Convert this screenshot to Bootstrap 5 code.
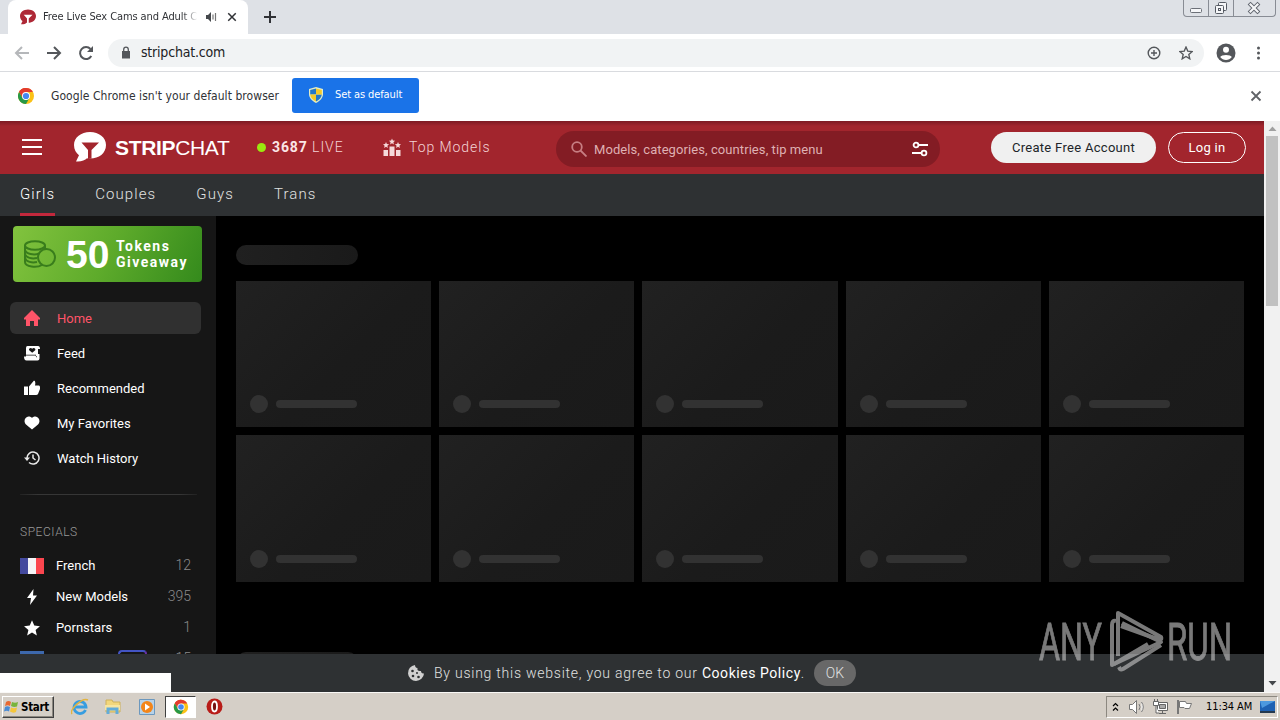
<!DOCTYPE html>
<html lang="en">
<head>
  <meta charset="UTF-8" />
  <meta name="viewport" content="width=device-width, initial-scale=1" />
  <title>Free Live Sex Cams and Adult Chat</title>
  <link href="https://cdn.jsdelivr.net/npm/bootstrap@5.3.0/dist/css/bootstrap.min.css" rel="stylesheet" />
  <style>
    html, body {
      height: 100%;
      overflow: hidden;
    }

    body {
      background: #000;
      font-family: Roboto, "Liberation Sans", sans-serif;
      font-size: 13px;
      line-height: 1.2;
    }

    svg { display: block; flex: none; }
    a { text-decoration: none; color: inherit; }

    .desktop { width: 1280px; height: 720px; }
    .ui-font { font-family: "DejaVu Sans Condensed", "DejaVu Sans", sans-serif; font-stretch: condensed; color: #303236; white-space: nowrap; }

    /* browser chrome */
    .tab-strip { height: 34px; background: #dee1e6; padding-left: 8px; }
    .browser-tab { width: 240px; height: 34px; background: #fff; border-radius: 8px 8px 0 0; padding: 0 7px 0 12px; font-size: 11px; }
    .tab-title { width: 155px; margin-left: 7px; overflow: hidden; letter-spacing: -.1px; -webkit-mask-image: linear-gradient(90deg, #000 90%, transparent 100%); mask-image: linear-gradient(90deg, #000 90%, transparent 100%); }
    .window-btns { height: 17px; width: 93px; margin-right: 4px; border: 1px solid #888c94; border-top: 0; border-radius: 0 0 4px 4px; }
    .window-btns span { border-right: 1px solid #888c94; width: 25px; }
    .window-btns span:last-child { border: 0; width: 41px; }
    .tool-bar { height: 38px; background: #fff; border-bottom: 1px solid #d9dbdf; padding-left: 14px; }
    .omnibox { width: 1096px; height: 28px; border-radius: 14px; background: #f1f3f4; margin-left: 14px; padding: 0 10px 0 12px; font-size: 14px; }
    .url-text { margin-left: 9px; letter-spacing: -.2px; color: #202124; }
    .info-bar { height: 49px; background: #fff; padding: 0 18px 1px; font-size: 12px; }
    .info-text { margin-left: 17px; width: 241px; letter-spacing: .06px; }
    .default-btn { width: 127px; height: 35px; margin-bottom: 2px; background: #1a73e8; color: #fff; border-radius: 3px; font-size: 11px; padding-left: 17px; letter-spacing: -.1px; }

    /* site */
    .site { width: 1264px; background: #000; }
    .site-head { height: 53px; background: linear-gradient(#7c1a23, #a2252d 5px); color: #fff; padding: 0 0 1px 22px; }
    .brand { font-family: "Liberation Sans", Arial, sans-serif; font-size: 21px; margin-left: 9px; width: 142px; line-height: 1; letter-spacing: -.34px; }
    .live-dot { width: 9px; height: 9px; border-radius: 50%; background: #9be80f; }
    .head-link { font-size: 14px; letter-spacing: .95px; color: #f3d3d5; font-weight: 300; }
    .head-link b { font-weight: 700; letter-spacing: .9px; color: #fbe6e6; }
    .search-box { width: 384px; height: 36px; border-radius: 18px; background: #831c24; color: #dfb0b3; margin-top: 3px; padding: 0 12px 0 15px; letter-spacing: .08px; }
    .round-btn { height: 31px; border-radius: 16px; font-size: 13px; letter-spacing: .3px; display: flex; align-items: center; justify-content: center; padding-top: 1px; }
    .sub-nav { height: 42px; background: #2e3133; padding-left: 20px; font-size: 15px; font-weight: 300; letter-spacing: 1.1px; color: #e0e1e1; }
    .sub-nav a { height: 42px; line-height: 40px; }
    .sub-nav a.current { color: #fff; border-bottom: 3px solid #c2283c; }

    .side-bar { width: 216px; background: #161616; color: #fff; letter-spacing: 0; }
    .promo { margin: 10px 14px 20px 13px; height: 56px; border-radius: 4px; background: linear-gradient(115deg, #82c33e, #5eab2b 50%, #348a1c); padding-left: 11px; }
    .promo-num { font: bold 39px/1 "Liberation Sans", sans-serif; letter-spacing: 0; width: 50px; margin-left: 10px; }
    .promo-text { font: bold 14px/16px Roboto, sans-serif; letter-spacing: 1.5px; }
    .side-link { height: 32px; margin: 0 15px 3px 10px; border-radius: 6px; padding-left: 14px; }
    .side-link span { margin-left: 17px; padding-top: 1px; }
    .side-link.current { background: #303030; color: #ff5468; }
    .side-rule { height: 1px; margin: 20px 19px 30px 20px; background: linear-gradient(90deg, #222, #363636 10%, #363636 90%, #222); }
    .side-title { color: #999; font-size: 12px; font-weight: 300; height: 15px; margin: 0 20px 10px; letter-spacing: .55px; }
    .special { height: 31px; padding: 0 25px 0 20px; }
    .special .ico { width: 24px; margin-right: 12px; display: flex; justify-content: center; }
    .special .count { color: #8a8a8a; font-size: 14px; font-weight: 300; }
    .badge-vr { width: 29px; height: 18px; border: 2px solid; border-color: #4354c4 #6a2fa5 #6a2fa5 #4354c4; border-radius: 4px; }

    .feed-area { padding: 29px 20px 0; overflow: hidden; }
    .ph-title { width: 122px; height: 20px; border-radius: 10px; background: linear-gradient(90deg, #202020, #1a1a1a); }
    .ph-card { height: 146.4px; background: linear-gradient(135deg, #212121, #1b1b1b 55%, #1a1a1a); padding: 0 0 14px 14px; }
    .ph-dot { width: 18px; height: 18px; border-radius: 50%; background: #323232; }
    .ph-line { width: 81px; height: 8px; border-radius: 4px; background: #323232; margin: 0 0 5px 8px; }

    .cookie-bar { position: absolute; left: 0; right: 0; bottom: 0; height: 38px; background: #2e3133; color: #e0e1e1; font-size: 14px; font-weight: 300; letter-spacing: .76px; padding-left: 407px; }
    .cookie-bar a { font-weight: 400; letter-spacing: .55px; }
    .cookie-ok { width: 42px; height: 26px; border-radius: 13px; background: #686868; margin-left: 9px; letter-spacing: 0; display: flex; align-items: center; justify-content: center; }
    .status-bubble { position: absolute; left: 0; bottom: 0; width: 171px; height: 19px; background: #fff; }
    .watermark { position: absolute; left: 1036px; top: 486px; }
    .scroll-track { width: 16px; background: #f1f1f1; padding: 0 1px 0 2px; }
    .scroll-thumb { height: 170px; width: 12px; background: #c1c1c1; }

    /* taskbar */
    .task-bar { height: 28px; background: #d5cfc7; border-top: 1px solid #f9f8f6; padding: 2px; color: #000; }
    .start-btn { width: 52px; height: 22px; border: 1px solid; border-color: #fff #404040 #404040 #fff; box-shadow: inset -1px -1px #8c8880; font: bold 11.5px "DejaVu Sans Condensed", sans-serif; letter-spacing: -.3px; padding-left: 1px; }
    .task-active { width: 31px; height: 22px; border: 1px solid; border-color: #404040 #fff #fff #404040; background: #fff; }
    .tray { width: 172px; height: 22px; border: 1px solid; border-color: #8c8880 #fff #fff #8c8880; font-size: 11px; padding: 0 2px 0 5px; }
    .clock { letter-spacing: -.1px; color: #000; margin-left: 13px; }
  </style>
</head>
<body>
<svg width="0" height="0" class="position-absolute">
  <defs>
    <symbol id="chrome" viewBox="0 0 20 20">
      <circle cx="10" cy="10" r="9" fill="#fbc116" />
      <path d="M10 10 2.2 5.5A9 9 0 0 1 17.8 5.5H10z" fill="#e33b2e" />
      <path d="M10 1A9 9 0 0 0 2.2 5.5L6.1 12.3 10 10z" fill="#e33b2e" />
      <path d="M2.2 5.5A9 9 0 0 0 10 19L13.9 12.2 10 14.5 6.1 12.3z" fill="#279847" />
      <circle cx="10" cy="10" r="4.5" fill="#fff" />
      <circle cx="10" cy="10" r="3.5" fill="#4688f1" />
    </symbol>
    <symbol id="logo" viewBox="0 0 32 30">
      <path fill="currentColor" fill-rule="evenodd" d="M16 0C7 0 0 5.500 0 13c0 4.500 2 8 5 10.200L2 29.500c5 .5 9-1.200 11-3.200 10 1.500 19-4 19-13.300C32 5.500 25 0 16 0ZM7.500 10.500h17.500l-7.500 7.500v8.300l-3.500.2V18z" />
    </symbol>
    <symbol id="star" viewBox="0 0 24 24">
      <path d="m12 1.800 3 7 7.600.7-5.800 5 1.700 7.500-6.500-4-6.500 4 1.700-7.500-5.800-5 7.600-.7z" />
    </symbol>
    <symbol id="close" viewBox="0 0 12 12">
      <path d="m1.500 1.500 9 9m0-9-9 9" stroke="currentColor" stroke-width="1.800" />
    </symbol>
  </defs>
</svg>

<div class="desktop d-flex flex-column overflow-hidden">
  <!-- TABS -->
  <div class="tab-strip d-flex ui-font">
    <div class="browser-tab d-flex align-items-center">
      <svg width="16" height="16" style="color:#ae2836"><use href="#logo" /></svg>
      <div class="tab-title">Free Live Sex Cams and Adult C</div>
      <svg width="12" height="12" viewBox="0 0 12 12" style="margin-left:7px"><path d="M1 4h2l3-3v10L3 8H1z" fill="#45484c" /><path d="M8 3.500v5M10.500 2v8" stroke="#777" stroke-width="1.200" /></svg>
      <svg width="10" height="10" class="ms-auto me-1"><use href="#close" /></svg>
    </div>
    <svg width="14" height="14" viewBox="0 0 14 14" class="align-self-center" style="margin-left:15px"><path d="M7 1v12M1 7h12" stroke="#303236" stroke-width="2" /></svg>
    <div class="window-btns d-flex ms-auto">
      <span><svg width="24" height="16" fill="#f5f6f8" stroke="#6c7078"><rect x="6.500" y="8.500" width="11" height="4" rx="1" /></svg></span>
      <span><svg width="24" height="16" fill="#f5f6f8" stroke="#555a63"><rect x="9.500" y="2.500" width="8" height="8" rx="1" /><rect x="6.500" y="5.500" width="8" height="8" rx="1" /><rect x="9.500" y="8.500" width="2" height="2" /></svg></span>
      <span><svg width="41" height="16"><path d="m16.500 4.500 7 7m0-7-7 7" stroke="#60656e" stroke-width="4" stroke-linecap="square" /><path d="m16.500 4.500 7 7m0-7-7 7" stroke="#f5f6f8" stroke-width="2.200" stroke-linecap="square" /></svg></span>
    </div>
  </div>

  <!-- TOOLBAR -->
  <div class="tool-bar d-flex align-items-center ui-font">
    <svg width="16" height="16" viewBox="0 0 16 16" fill="none" stroke="#b5b7ba" stroke-width="2"><path d="M15 8H2M8 2 2 8l6 6" /></svg>
    <svg width="16" height="16" viewBox="0 0 16 16" fill="none" stroke="#54575b" stroke-width="2" class="ms-3"><path d="M1 8h13M8 2l6 6-6 6" /></svg>
    <svg width="16" height="16" viewBox="0 0 16 16" class="ms-3"><path d="M13.300 11A6 6 0 1 1 12.500 4" fill="none" stroke="#54575b" stroke-width="2" /><path d="M15 1v6H9z" fill="#54575b" /></svg>
    <div class="omnibox d-flex align-items-center">
      <svg width="12" height="14" viewBox="0 0 12 14"><path d="M2 5h8v7.500H2z" fill="#54575b" /><path d="M3.700 6V3.500a2.300 2.300 0 0 1 4.600 0V6" fill="none" stroke="#54575b" stroke-width="1.300" /></svg>
      <span class="url-text">stripchat.com</span>
      <svg width="14" height="14" viewBox="0 0 14 14" fill="none" stroke="#54575b" stroke-width="1.400" class="ms-auto"><circle cx="7" cy="7" r="5.800" /><path d="M7 4v6M4 7h6" /></svg>
      <svg width="14" height="14" viewBox="0 0 24 24" fill="none" stroke="#54575b" stroke-width="2.300" style="margin:0 1px 0 18px"><use href="#star" /></svg>
    </div>
    <svg width="20" height="20" viewBox="0 0 20 20" style="margin:0 4px 0 12px"><circle cx="10" cy="10" r="9.500" fill="#54575b" /><circle cx="10" cy="6.800" r="3" fill="#fff" /><path d="M4.200 14c1-2.700 10.600-2.700 11.600 0-2.700 4-8.900 4-11.600 0Z" fill="#fff" /></svg>
    <svg width="36" height="16" viewBox="0 0 36 16" fill="#54575b"><circle cx="18.500" cy="3" r="1.500" /><circle cx="18.500" cy="8" r="1.500" /><circle cx="18.500" cy="13" r="1.500" /></svg>
  </div>

  <!-- DEFAULT BROWSER BAR -->
  <div class="info-bar d-flex align-items-center ui-font">
    <svg width="16" height="16" viewBox="1 1 18 18"><use href="#chrome" width="20" height="20" /></svg>
    <span class="info-text">Google Chrome isn't your default browser</span>
    <div class="default-btn d-flex align-items-center">
      <svg width="14" height="16" viewBox="0 0 14 16"><path d="M7 0 14 2v5c0 4-3 7-7 9-4-2-7-5-7-9V2z" fill="#e3ecc5" /><path d="M7 1.500v6H1.200V3zM7 7.500h5.800C12.500 11 10 13 7 14.500z" fill="#2377c8" /><path d="M7 1.500 12.800 3v4.500H7zM7 7.500v7C4 13 1.500 11 1.200 7.500z" fill="#f5c928" /></svg>
      <span style="margin-left:12px">Set as default</span>
    </div>
    <svg width="12" height="12" class="ms-auto" style="color:#606367"><use href="#close" /></svg>
  </div>

  <!-- PAGE -->
  <div class="d-flex flex-grow-1 overflow-hidden">
    <div class="site position-relative overflow-hidden d-flex flex-column">
      <header class="site-head d-flex align-items-center">
        <svg width="20" height="16" viewBox="0 0 20 16" stroke="#fff" stroke-width="2"><path d="M0 1h20M0 8h20M0 15h20" /></svg>
        <svg width="32" height="30" style="margin-left:32px"><use href="#logo" /></svg>
        <div class="brand"><b>STRIP</b>CHAT</div>
        <span class="live-dot"></span>
        <div class="head-link" style="width:111px;margin-left:6px"><b>3687</b> LIVE</div>
        <svg width="18" height="18" viewBox="0 0 18 18" fill="#f6d9da"><path d="M.5 12h4.500v6H.500zM6.500 8.500h5V18h-5zM13 12h4.500v6H13z" /><use href="#star" x="5.500" y="0" width="7" height="7" /><use href="#star" x="-.5" y="3.500" width="7" height="7" /><use href="#star" x="11.500" y="3.500" width="7" height="7" /></svg>
        <div class="head-link ms-2" style="width:147px">Top Models</div>
        <div class="search-box d-flex align-items-center">
          <svg width="16" height="16" viewBox="0 0 16 16" fill="none" stroke="#c77e83" stroke-width="1.800"><circle cx="6" cy="6" r="4.800" /><path d="m9.500 9.500 6 6" /></svg>
          <span style="margin-left:7px;padding-top:2px">Models, categories, countries, tip menu</span>
          <svg width="16" height="16" viewBox="0 0 16 16" fill="none" stroke="#fff" stroke-width="1.800" class="ms-auto"><circle cx="4" cy="4" r="2.400" /><path d="M6.500 4H16M0 12h9.500" /><circle cx="12" cy="12" r="2.400" /></svg>
        </div>
        <a href="#" class="round-btn text-dark" style="width:165px;margin-left:51px;background:#f0f0f0">Create Free Account</a>
        <a href="#" class="round-btn border border-white" style="width:78px;margin-left:12px">Log in</a>
      </header>
      <nav class="sub-nav d-flex">
        <a href="#" class="current">Girls</a>
        <a href="#" style="margin-left:40px">Couples</a>
        <a href="#" style="margin-left:40px">Guys</a>
        <a href="#" style="margin-left:40px">Trans</a>
      </nav>

      <div class="d-flex flex-grow-1 overflow-hidden">
        <aside class="side-bar flex-shrink-0">
          <div class="promo d-flex align-items-center">
            <svg width="32" height="28" viewBox="0 0 32 28" fill="none" stroke="#397d1c" stroke-width="2"><ellipse cx="11" cy="5.500" rx="10" ry="4.300" /><path d="M1 5.500V22c0 5 12 6 17 3M21 5.500V9M1 10c1 4 9 5.500 14 3.500M1 14c1 4 7 5 12 4M1 18c1 4 7 5 12 4" /><circle cx="22.500" cy="17.500" r="8.500" /></svg>
            <div class="promo-num">50</div>
            <div class="promo-text">Tokens<br />Giveaway</div>
          </div>
          <a href="#" class="side-link current d-flex align-items-center">
            <svg width="16" height="16" viewBox="0 0 16 16" fill="currentColor"><path d="m8 0 8 8v1.500h-2V16H10v-5H6v5H2V9.500H0V8z" /></svg>
            <span>Home</span>
          </a>
          <a href="#" class="side-link d-flex align-items-center">
            <svg width="16" height="16" viewBox="0 0 16 16"><path fill="#fff" d="M3.500 1H14q2 0 2 3h-2v5h1.500v4.500q0 2-2 2H2.500q-2.500 0-2.500-4h2V3q0-2 1.500-2Z" /><path fill="#161616" d="M8.200 7.800 5.200 5.200C4.200 3.300 6.900 2 8.200 3.800c1.300-1.800 4-.5 3 1.400zM2 10.500h9.500q.8 2 1.500 2v-1.200h-1V9.800H2z" /></svg>
            <span>Feed</span>
          </a>
          <a href="#" class="side-link d-flex align-items-center">
            <svg width="16" height="16" viewBox="0 0 16 16" fill="#fff"><path d="M0 6.500h4V15H0zM5 6.500l5-6q2 .5 1 5h4q1.500 1 1 3.500l-2 5q-.5 1-2 1H5z" /></svg>
            <span>Recommended</span>
          </a>
          <a href="#" class="side-link d-flex align-items-center">
            <svg width="16" height="16" viewBox="0 0 16 16" fill="#fff"><path d="M8 14.500 2 9.500C-1.800 5.500 2.500-1.500 8 2.700c5.500-4.200 9.800 2.800 6 6.800z" /></svg>
            <span>My Favorites</span>
          </a>
          <a href="#" class="side-link d-flex align-items-center">
            <svg width="16" height="16" viewBox="0 0 16 16"><path d="M3 8a6 6 0 1 1 2 4.500M9 4.500V8l2.500 2" fill="none" stroke="#e8e8e8" stroke-width="1.500" /><path d="M0 7.500h6L3 11z" fill="#e8e8e8" /></svg>
            <span>Watch History</span>
          </a>
          <div class="side-rule"></div>
          <div class="side-title">SPECIALS</div>
          <a href="#" class="special d-flex align-items-center">
            <span class="ico"><svg width="24" height="16"><path fill="#444a9e" d="M0 0h8v16H0z" /><path fill="#f5f5f7" d="M8 0h8v16H8z" /><path fill="#fb464f" d="M16 0h8v16h-8z" /></svg></span>
            <span>French</span><span class="count ms-auto">12</span>
          </a>
          <a href="#" class="special d-flex align-items-center">
            <span class="ico"><svg width="12" height="16" fill="#fff"><path d="M7.500 0 1 9h4L4 16l7-9.500H7z" /></svg></span>
            <span>New Models</span><span class="count ms-auto">395</span>
          </a>
          <a href="#" class="special d-flex align-items-center">
            <span class="ico"><svg width="18" height="18" fill="#fff"><use href="#star" /></svg></span>
            <span>Pornstars</span><span class="count ms-auto">1</span>
          </a>
          <a href="#" class="special d-flex align-items-center">
            <span class="ico"><svg width="24" height="16"><path fill="#3d68ac" d="M0 0h24v16H0z" /></svg></span>
            <span>VR Cams</span><span class="badge-vr" style="margin-left:9px"></span><span class="count ms-auto">15</span>
          </a>
        </aside>

        <main class="feed-area flex-grow-1">
          <div class="ph-title mb-3"></div>
          <div class="row row-cols-5 g-2" id="cards"></div>
          <div class="ph-title" style="margin-top:70px"></div>
        </main>
      </div>

      <div class="cookie-bar d-flex align-items-center">
        <svg width="18" height="18" viewBox="0 0 18 18"><path d="M8 1a8 8 0 1 0 9 8.500c-2 .5-3-1-3-2.500-3 .5-4-1-3.500-3C8.500 4 8 2.500 8 1Z" fill="#d0d0d0" /><g fill="#2e3133"><circle cx="5.500" cy="7" r="1.300" /><circle cx="6" cy="12" r="1.300" /><circle cx="10" cy="9" r="1" /><circle cx="11.500" cy="13" r="1.300" /></g></svg>
        <span class="text-nowrap" style="margin-left:9px">By using this website, you agree to our <a href="#" class="text-white">Cookies Policy</a>.</span>
        <span class="cookie-ok">OK</span>
      </div>
      <div class="status-bubble"></div>
      <svg class="watermark" width="200" height="70" viewBox="0 0 200 70" opacity=".62">
        <g fill="#c4c4c4" stroke="#c4c4c4" stroke-width=".9" font-family="Roboto" font-size="52">
          <text transform="translate(3 53) scale(.62 1)">ANY</text>
          <text transform="translate(131 53) scale(.635 1)">RUN</text>
        </g>
        <g fill="none" stroke="#c4c4c4" stroke-width="4" stroke-linejoin="round">
          <path d="M82 49V6l43 24q1 2-1 3L85 19" />
          <path d="M80 14q-4-1-4 4v40l49-23-39-19" />
          <path d="M78 57l34-20M83 60l1 2q1 1 3 0l38-24" />
        </g>
      </svg>
    </div>

    <div class="scroll-track d-flex flex-column">
      <svg width="13" height="15"><path d="m2.500 10 4-4.500 4 4.500z" fill="#a0a0a0" /></svg>
      <div class="scroll-thumb"></div>
      <svg width="13" height="16" class="mt-auto"><path d="m2.500 5 4 4.500 4-4.500z" fill="#45484c" /></svg>
    </div>
  </div>

  <!-- TASKBAR -->
  <div class="task-bar d-flex align-items-center">
    <div class="start-btn d-flex align-items-center">
      <svg width="15" height="15" viewBox="0 0 15 15"><path d="M2 3q2.500-2 5 0L6 7q-2-1.500-5 0z" fill="#e86932" /><path d="M8 3q3 1.500 6 0l-1 4.500q-3 1-6-.5z" fill="#78b43c" /><path d="M1 8q2-1.500 5 0l-1 4.500q-2-1.500-5 0z" fill="#4a8bd4" /><path d="M7 8.500q3 1.500 6 0L12 13q-3 1.500-6-.5z" fill="#f5c63b" /></svg>
      <span style="margin-left:2px">Start</span>
    </div>
    <svg width="18" height="18" viewBox="0 0 18 18" style="margin-left:17px"><path d="M14.500 12A6 6 0 1 1 15 9H4" fill="none" stroke="#379de0" stroke-width="2.800" /><path d="M1 16C-2 12 11-1 17 2" fill="none" stroke="#e2b440" stroke-width="1.500" /></svg>
    <svg width="18" height="18" viewBox="0 0 18 18" style="margin-left:15px"><path d="M2 2h6l1 2h7v10H2z" fill="#f2d77c" stroke="#ceb15a" /><path d="M1 7h15v5H1z" fill="#f7e5a0" /><path d="M4 16v-5h9v5" fill="none" stroke="#62acd9" stroke-width="3" /></svg>
    <svg width="18" height="18" viewBox="0 0 18 18" style="margin-left:16px"><path d="M1.500 1.500h15v15h-15z" fill="#b7d2e8" stroke="#6c98be" /><circle cx="9" cy="9" r="6" fill="#f38519" /><path d="m7 5.500 5 3.500-5 3.500z" fill="#fff" /></svg>
    <div class="task-active d-flex align-items-center justify-content-center" style="margin-left:9px"><svg width="16" height="16"><use href="#chrome" /></svg></div>
    <svg width="17" height="17" viewBox="0 0 17 17" style="margin-left:10px"><circle cx="8.500" cy="8.500" r="8" fill="#b81c18" /><ellipse cx="8.500" cy="8.500" rx="2.500" ry="5" fill="#711" stroke="#fff" stroke-width="1.800" /></svg>
    <div class="tray d-flex align-items-center ms-auto ui-font">
      <svg width="7" height="10" viewBox="0 0 7 10" fill="none" stroke="#000" stroke-width="1.200"><path d="m1 4 2.500-2.500L6 4M1 8.500 3.500 6 6 8.500" /></svg>
      <svg width="18" height="16" viewBox="0 0 18 16" fill="#fff" stroke="#777" style="margin-left:9px"><path d="M1.500 5.500h3l4-4v13l-4-4h-3zM11 5q2 3 0 6M13.500 3q3.500 5 0 10" /></svg>
      <svg width="17" height="16" viewBox="0 0 17 16" fill="#fff" stroke="#666" style="margin-left:6px"><path d="M5.500 3.500h10v8h-10zM7 14.500h7M10.500 12v2" /><path d="M7.500 5.500h6v4h-6z" fill="#aaa" /><path d="M1.500 2.500h5v4h-5zM2.500 0v2M5.500 0v2M4 7v7h3" /></svg>
      <svg width="17" height="16" viewBox="0 0 17 16" fill="#fff" stroke="#777" style="margin-left:7px"><path d="M2 1v14" stroke-width="2" /><path d="M3.500 2.500h6l1 2h5l-2 5H9l-1-1H3.500z" /></svg>
      <span class="clock">11:34 AM</span>
      <svg width="15" height="12" viewBox="0 0 15 12" class="ms-auto"><path d="M0 0h15v10H0z" fill="#1e61b3" /><path d="M0 0h15L2 7z" fill="#4c98df" /><path d="M0 10h15v2H0z" fill="#23384f" /></svg>
    </div>
  </div>
</div>

<script>
  // Loading placeholders: two rows of five
  const cards = document.getElementById('cards');
  for (let i = 0; i < 10; i++) {
    const col = document.createElement('div');
    col.className = 'col';
    col.innerHTML = '<div class="ph-card d-flex align-items-end"><span class="ph-dot"></span><span class="ph-line"></span></div>';
    cards.appendChild(col);
  }
</script>
<script src="https://cdn.jsdelivr.net/npm/bootstrap@5.3.0/dist/js/bootstrap.bundle.min.js"></script>
</body>
</html>
